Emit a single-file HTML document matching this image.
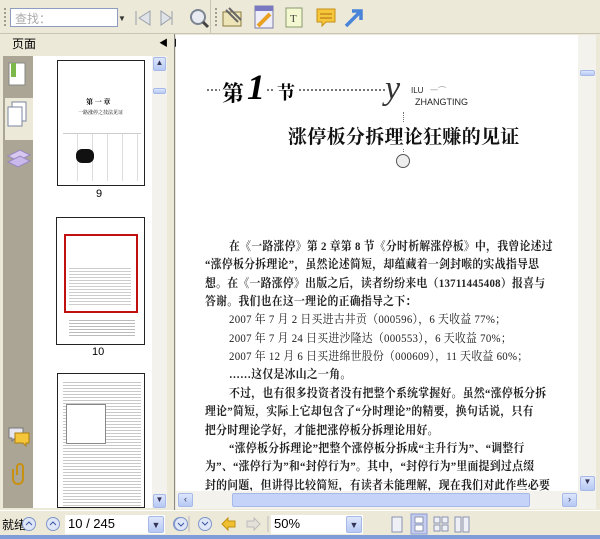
<!DOCTYPE html>
<html><head><meta charset="utf-8"><style>
*{margin:0;padding:0;box-sizing:border-box}
body{width:600px;height:539px;overflow:hidden;background:#ece9d8;font-family:"Liberation Sans","Noto Sans CJK SC",sans-serif;position:relative}
.abs{position:absolute}
.ser{font-family:"Liberation Serif","Noto Serif CJK SC",serif}
.ln{position:absolute;left:205px;font-size:12px;letter-spacing:0.3px;white-space:nowrap;color:#222;font-weight:bold;font-family:"Liberation Serif","Noto Serif CJK SC",serif;line-height:18px;transform:scaleX(0.905);transform-origin:0 0}
.sb{background:#f3f2ec}
.btn{background:linear-gradient(#dde6fb,#b6c8f4);border:1px solid #a7b9e8;border-radius:2px}
</style></head><body>
<div class="abs" style="left:0;top:0;width:600px;height:34px;background:#ece9d8;border-bottom:1px solid #c9c5b4"></div>
<div class="abs" style="left:4px;top:8px;width:3px;height:18px;border-left:2px dotted #a09d8f"></div>
<div class="abs" style="left:10px;top:8px;width:108px;height:19px;background:#fff;border:1px solid #8d9cbf;font-size:12px;color:#aaa;padding:1px 4px">查找：</div>
<div class="abs" style="left:118px;top:14px;font-size:8px;color:#333">▼</div>
<svg class="abs" style="left:132px;top:7px" width="80" height="22"><path d="M4 4v14M18 4L7 11l11 7z" fill="#dfe3e8" stroke="#9aa0aa"/><path d="M29 4l10 7-10 7z M40 4v14" fill="#dfe3e8" stroke="#9aa0aa"/><circle cx="66" cy="10" r="7" fill="#e8ecf2" stroke="#7c8592" stroke-width="2"/><path d="M71 15l5 5" stroke="#444" stroke-width="3"/></svg>
<div class="abs" style="left:210px;top:0;width:1px;height:34px;background:#c9c5b4"></div>
<div class="abs" style="left:215px;top:8px;width:3px;height:18px;border-left:2px dotted #a09d8f"></div>
<svg class="abs" style="left:220px;top:4px" width="150" height="26"><rect x="3" y="8" width="18" height="14" fill="#ede4b8" stroke="#8a7a40"/><path d="M6 6l12 12M9 4l12 12" stroke="#666" stroke-width="2"/><rect x="35" y="2" width="18" height="22" fill="#eeeef8" stroke="#7a7aa8"/><rect x="35" y="2" width="18" height="5" fill="#7a78c0"/><path d="M38 22l12-12" stroke="#e8a020" stroke-width="4"/><rect x="66" y="4" width="16" height="19" fill="#f4f8d0" stroke="#8a9a70"/><text x="70" y="18" font-size="11" fill="#444" font-family="Liberation Serif">T</text><path d="M97 5h18v13h-9l-4 4v-4h-5z" fill="#f5c53a" stroke="#c7901a"/><path d="M100 10h12M100 14h12" stroke="#b07010"/><path d="M126 22l14-14M132 7h9v9" stroke="#4a84d8" stroke-width="3.5" fill="none"/></svg>
<div class="abs" style="left:0;top:34px;width:170px;height:476px;background:#ece9d8"></div>
<div class="abs" style="left:12px;top:35px;font-size:12px;color:#000">页面</div>
<div class="abs" style="left:159px;top:36px;font-size:9px;font-weight:bold">◀◀</div>
<div class="abs" style="left:3px;top:56px;width:30px;height:452px;background:#aaa595"></div>
<div class="abs" style="left:5px;top:98px;width:28px;height:42px;background:#ece9d8"></div>
<svg class="abs" style="left:6px;top:60px" width="26" height="140"><rect x="3" y="3" width="16" height="22" fill="#fff" stroke="#888"/><rect x="5" y="3" width="5" height="14" fill="#7cb84a"/><rect x="6" y="42" width="14" height="19" fill="#fff" stroke="#7a86a0"/><rect x="2" y="47" width="14" height="19" fill="#fff" stroke="#7a86a0"/><path d="M2 96l12-6 10 5-12 6z" fill="#d8c8f0" stroke="#9888c0"/><path d="M2 102l12-6 10 5-12 6z" fill="#c8b8ec" stroke="#9888c0"/></svg>
<svg class="abs" style="left:6px;top:425px" width="26" height="70"><path d="M3 3h14v10h-8l-3 3v-3H3z" fill="#e6e6f0" stroke="#777"/><path d="M9 8h14v10h-3v3l-3-3H9z" fill="#f5c53a" stroke="#b08010"/><path d="M11 50v-8a3 3 0 016 0v12a5 5 0 01-10 0v-10" stroke="#c89010" stroke-width="2" fill="none"/></svg>
<div class="abs" style="left:33px;top:56px;width:119px;height:452px;background:#fff"></div>
<div class="abs sb" style="left:152px;top:56px;width:15px;height:452px"></div>
<div class="abs btn" style="left:153px;top:57px;width:13px;height:14px;font-size:8px;text-align:center;color:#335">▲</div>
<div class="abs btn" style="left:153px;top:88px;width:13px;height:6px"></div>
<div class="abs btn" style="left:153px;top:494px;width:13px;height:14px;font-size:8px;text-align:center;color:#335">▼</div>
<div class="abs" style="left:57px;top:60px;width:88px;height:126px;border:1px solid #222;background:#fff;overflow:hidden">
<div class="abs ser" style="left:28px;top:36px;font-size:7px;font-weight:bold">第 一 章</div>
<div class="abs ser" style="left:20px;top:48px;font-size:5px">一路涨停之技法见证</div>
<div class="abs" style="left:5px;top:72px;width:78px;height:48px;border-top:1px solid #ccc;background:repeating-linear-gradient(90deg,#fff 0 14px,#ddd 14px 15px)"></div>
<div class="abs" style="left:18px;top:88px;width:18px;height:14px;background:#111;border-radius:6px"></div>
</div>
<div class="abs" style="left:96px;top:188px;font-size:11px">9</div>
<div class="abs" style="left:56px;top:217px;width:89px;height:128px;border:1px solid #222;background:#fff">
<div class="abs" style="left:7px;top:16px;width:74px;height:79px;border:2px solid #c01010"></div>
<div class="abs" style="left:12px;top:100px;width:66px;height:18px;background:repeating-linear-gradient(#fff 0 2px,#bbb 2px 3px)"></div>
<div class="abs" style="left:12px;top:48px;width:62px;height:40px;background:repeating-linear-gradient(#fff 0 2px,#ccc 2px 3px)"></div>
</div>
<div class="abs" style="left:92px;top:346px;font-size:11px">10</div>
<div class="abs" style="left:57px;top:373px;width:88px;height:135px;border:1px solid #222;background:#fff">
<div class="abs" style="left:5px;top:6px;width:78px;height:126px;background:repeating-linear-gradient(#fff 0 2px,#c8c8c8 2px 3px)"></div>
<div class="abs" style="left:8px;top:30px;width:40px;height:40px;border:1px solid #888;background:#fff"></div>
</div>
<div class="abs" style="left:167px;top:34px;width:8px;height:476px;background:#ece9d8;border-right:1px solid #888"></div>
<div class="abs" style="left:176px;top:35px;width:402px;height:456px;background:#fff"></div>
<div class="abs" style="left:207px;top:89px;width:178px;border-top:2px dotted #777"></div>
<div class="abs ser" style="left:220px;top:77px;font-size:22px;font-weight:bold;background:#fff;padding:0 2px">第</div>
<div class="abs ser" style="left:247px;top:67px;font-size:36px;font-style:italic;font-weight:bold;background:#fff;line-height:40px">1</div>
<div class="abs ser" style="left:275px;top:79px;font-size:18px;font-weight:bold;background:#fff;padding:0 2px">节</div>
<div class="abs ser" style="left:385px;top:70px;font-size:34px;font-style:italic;color:#333">y</div>
<div class="abs" style="left:411px;top:85px;font-size:8px;color:#222">ILU &nbsp; <span style="color:#999">一⌒</span></div>
<div class="abs" style="left:415px;top:97px;font-size:9px;color:#222">ZHANGTING</div>
<div class="abs" style="left:403px;top:112px;height:40px;border-left:1px dotted #777"></div>
<div class="abs ser" style="left:288px;top:122px;font-size:19px;font-weight:bold;letter-spacing:0.3px;color:#111;background:#fff;white-space:nowrap">涨停板分拆理论狂赚的见证</div>
<div class="abs" style="left:396px;top:154px;width:14px;height:14px;border-radius:7px;border:1.5px solid #555;background:#eee"></div>
<div class="ln" style="top:237px;left:229px">在《一路涨停》第 2 章第 8 节《分时析解涨停板》中，我曾论述过</div>
<div class="ln" style="top:255px">“涨停板分拆理论”，虽然论述简短，却蕴藏着一剑封喉的实战指导思</div>
<div class="ln" style="top:274px">想。在《一路涨停》出版之后，读者纷纷来电（13711445408）报喜与</div>
<div class="ln" style="top:292px">答谢。我们也在这一理论的正确指导之下：</div>
<div class="ln" style="top:310px;left:229px;font-weight:normal">2007 年 7 月 2 日买进古井贡（000596），6 天收益 77%；</div>
<div class="ln" style="top:329px;left:229px;font-weight:normal">2007 年 7 月 24 日买进沙隆达（000553），6 天收益 70%；</div>
<div class="ln" style="top:347px;left:229px;font-weight:normal">2007 年 12 月 6 日买进绵世股份（000609），11 天收益 60%；</div>
<div class="ln" style="top:365px;left:229px">……这仅是冰山之一角。</div>
<div class="ln" style="top:384px;left:229px">不过，也有很多投资者没有把整个系统掌握好。虽然“涨停板分拆</div>
<div class="ln" style="top:402px">理论”简短，实际上它却包含了“分时理论”的精要，换句话说，只有</div>
<div class="ln" style="top:421px">把分时理论学好，才能把涨停板分拆理论用好。</div>
<div class="ln" style="top:439px;left:229px">“涨停板分拆理论”把整个涨停板分拆成“主升行为”、“调整行</div>
<div class="ln" style="top:457px">为”、“涨停行为”和“封停行为”。其中，“封停行为”里面提到过点缀</div>
<div class="ln" style="top:476px">封的问题，但讲得比较简短，有读者未能理解，现在我们对此作些必要</div>
<div class="abs sb" style="left:578px;top:35px;width:18px;height:456px"></div>
<div class="abs btn" style="left:580px;top:70px;width:15px;height:6px"></div>
<div class="abs btn" style="left:580px;top:476px;width:15px;height:15px;font-size:8px;text-align:center;color:#335">▼</div>
<div class="abs sb" style="left:176px;top:491px;width:402px;height:18px"></div>
<div class="abs btn" style="left:178px;top:493px;width:15px;height:14px;font-size:9px;text-align:center;color:#335">‹</div>
<div class="abs btn" style="left:232px;top:493px;width:298px;height:14px;background:#c4d3f7"></div>
<div class="abs btn" style="left:562px;top:493px;width:15px;height:14px;font-size:9px;text-align:center;color:#335">›</div>
<div class="abs sb" style="left:578px;top:491px;width:18px;height:18px"></div>
<div class="abs" style="left:596px;top:34px;width:4px;height:476px;background:#ece9d8"></div>
<div class="abs" style="left:0;top:510px;width:600px;height:26px;background:#ece9d8;border-top:1px solid #fff"></div>
<div class="abs" style="left:0;top:535px;width:600px;height:4px;background:#7f9bd8"></div>
<div class="abs" style="left:2px;top:516px;font-size:12px">就绪</div>
<svg class="abs" style="left:20px;top:514px" width="180" height="20"><g fill="#dfe6f8" stroke="#8096c8"><circle cx="9" cy="10" r="6.5"/><circle cx="33" cy="10" r="6.5"/><circle cx="160" cy="10" r="6.5"/></g><path d="M6 11l3-3 3 3M30 11l3-3 3 3M157 9l3 3 3-3" stroke="#3a58a0" fill="none"/></svg>
<div class="abs" style="left:65px;top:515px;width:100px;height:19px;background:#fff;font-size:13px;padding:1px 3px">10 / 245</div>
<div class="abs btn" style="left:148px;top:516px;width:16px;height:17px;font-size:9px;text-align:center;line-height:16px;color:#335">▼</div>
<svg class="abs" style="left:168px;top:514px" width="210" height="20"><g fill="#dfe6f8" stroke="#8096c8"><circle cx="13" cy="10" r="6.5"/><circle cx="37" cy="10" r="6.5"/></g><path d="M10 9l3 3 3-3M34 8l3 3 3-3" stroke="#3a58a0" fill="none"/><path d="M21 2v16" stroke="#bbb"/><path d="M54 10l6-6v3h7v6h-7v3z" fill="#f0c030" stroke="#c09010"/><path d="M92 10l-6-6v3h-7v6h7v3z" fill="#e4e2d8" stroke="#bbb"/><path d="M100 2v16" stroke="#bbb"/></svg>
<div class="abs" style="left:271px;top:515px;width:92px;height:19px;background:#fff;font-size:13px;padding:1px 3px">50%</div>
<div class="abs btn" style="left:346px;top:516px;width:16px;height:17px;font-size:9px;text-align:center;line-height:16px;color:#335">▼</div>
<svg class="abs" style="left:388px;top:513px" width="90" height="22"><rect x="4" y="4" width="10" height="15" fill="#eef0f6" stroke="#8a94b0"/><rect x="23" y="1" width="16" height="20" fill="#c7cdf0" stroke="#8a9ad0"/><rect x="27" y="4" width="8" height="6" fill="#fff" stroke="#8a94b0"/><rect x="27" y="12" width="8" height="6" fill="#fff" stroke="#8a94b0"/><g fill="#eef0f6" stroke="#8a94b0"><rect x="46" y="4" width="6" height="6"/><rect x="54" y="4" width="6" height="6"/><rect x="46" y="12" width="6" height="6"/><rect x="54" y="12" width="6" height="6"/><rect x="67" y="4" width="6" height="15"/><rect x="75" y="4" width="6" height="15"/></g></svg>
</body></html>
